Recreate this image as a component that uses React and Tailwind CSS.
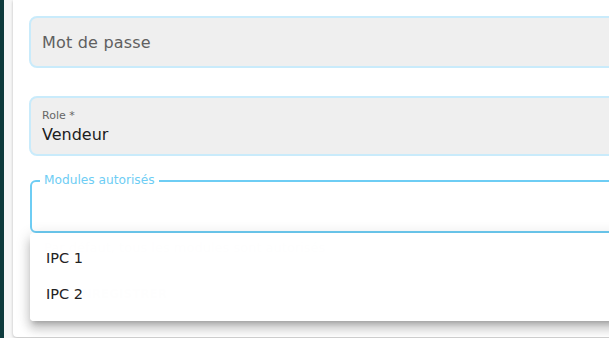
import React from "react";

const font = { fontFamily: "'DejaVu Sans', 'Noto Sans', sans-serif" };

const App = () => {
  return (
    <div className="w-[609px] h-[338px] flex bg-[#f7f7f7] overflow-hidden" style={font}>
      {/* sidebar edge */}
      <div className="w-[4px] shrink-0 bg-[#0f3b3d]" />

      <div className="pl-[9px] shrink-0">
        {/* form card */}
        <div className="relative w-[620px] h-[337px] bg-white rounded-bl-[4px] shadow-[0_1px_3px_rgba(0,0,0,0.25)] pl-[16px] pt-[16px]">
          <div className="flex flex-col">
            {/* Mot de passe */}
            <div className="h-[52px] flex items-center pl-[11px] pt-[2px] bg-[#efefef] border-2 border-[#c9ebfb] rounded-[8px]">
              <span className="text-[16px] tracking-[0.2px] text-[#606060]">Mot de passe</span>
            </div>

            {/* Role */}
            <div className="mt-[28px] h-[60px] flex flex-col justify-center pl-[11px] pt-[2px] bg-[#efefef] border-2 border-[#c9ebfb] rounded-[8px]">
              <span className="text-[11px] leading-[15px] text-[#666]">Role *</span>
              <span className="text-[16px] leading-[23px] text-[#1c1c1c]">Vendeur</span>
            </div>

            {/* Modules autorisés */}
            <fieldset className="mt-[18px] ml-px h-[59px] px-[8px] border-2 border-[#6ecdf4] rounded-[6px]">
              <legend className="px-[4px] text-[12.2px] leading-[13px] text-[#6ecdf4]">Modules autorisés</legend>
            </fieldset>

            <p className="mt-[5px] ml-[15px] text-[13px] text-[#888]">
              Par défaut, tous les modules sont autorisés
            </p>

            <div className="mt-[18px] ml-[9px] w-[145px] h-[36px] flex items-center gap-2 px-[16px] bg-[#e4e4e4] rounded-[4px] text-[12px] font-semibold text-[#a8a8a8]">
              <svg width="16" height="16" viewBox="0 0 24 24" fill="currentColor">
                <path d="M17 3H5a2 2 0 0 0-2 2v14a2 2 0 0 0 2 2h14a2 2 0 0 0 2-2V7l-4-4zm-5 16a3 3 0 1 1 0-6 3 3 0 0 1 0 6zm3-10H5V5h10v4z" />
              </svg>
              ENREGISTRER
            </div>
          </div>

          {/* dropdown menu */}
          <div className="absolute left-[17px] top-[233px] w-[620px] py-[8px] bg-white/[0.99] rounded-[4px] shadow-[0_5px_5px_-3px_rgba(0,0,0,0.2),0_8px_10px_1px_rgba(0,0,0,0.14),0_3px_14px_2px_rgba(0,0,0,0.12)]">
            <div className="h-[36px] flex items-center px-[16px] text-[14.5px] text-[#222]">IPC 1</div>
            <div className="h-[36px] flex items-center px-[16px] text-[14.5px] text-[#222]">IPC 2</div>
          </div>
        </div>
      </div>
    </div>
  );
};

export default App;
